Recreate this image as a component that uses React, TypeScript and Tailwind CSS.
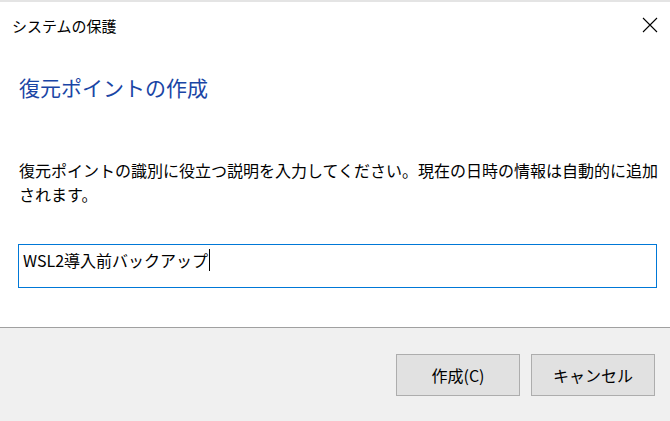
const FONT = '"Noto Sans CJK JP", "Noto Sans", sans-serif'

function CloseIcon() {
  return (
    <svg width="16" height="16" viewBox="0 0 16 16" className="block">
      <path d="M1 1 L15 15 M15 1 L1 15" stroke="#000" strokeWidth="1.1" fill="none" />
    </svg>
  )
}

function DialogButton({ label }: { label: string }) {
  return (
    <button
      type="button"
      className="flex h-[42px] w-[124px] items-center justify-center border border-[#adadad] bg-[#e1e1e1] text-[16px] leading-none text-black"
    >
      {label}
    </button>
  )
}

export default function App() {
  return (
    <div className="flex h-[421px] w-[670px] flex-col bg-white" style={{ fontFamily: FONT }}>
      <div className="h-[2px] bg-[#e4e4e4]" />

      {/* title bar */}
      <div className="flex h-[46px] items-center justify-between pl-[12px] pr-[12px]">
        <span className="text-[15px] leading-none text-black">システムの保護</span>
        <CloseIcon />
      </div>

      {/* body */}
      <div className="flex flex-1 flex-col pl-[19px] pr-[13px]">
        <h1 className="mt-[25px] h-[28px] text-[21px] font-normal leading-[28px] text-[#1a45a5]">
          復元ポイントの作成
        </h1>

        <p className="mt-[57px] whitespace-nowrap text-[16px] leading-[24px] text-black">
          復元ポイントの識別に役立つ説明を入力してください。現在の日時の情報は自動的に追加
          <br />
          されます。
        </p>

        <div className="ml-[-1px] mt-[38px] h-[44px] border border-[#0078d7] pl-[4px] pt-[5px]">
          <div className="flex h-[20px] items-center text-[16px] leading-[20px] text-black">
            <span>WSL2導入前バックアップ</span>
            <span className="ml-[1px] h-[22px] w-[1px] bg-black" />
          </div>
        </div>
      </div>

      {/* footer */}
      <div className="flex h-[94px] justify-end gap-[11px] border-t border-[#a0a0a0] bg-[#f0f0f0] pr-[15px] pt-[26px]">
        <DialogButton label="作成(C)" />
        <DialogButton label="キャンセル" />
      </div>
    </div>
  )
}
